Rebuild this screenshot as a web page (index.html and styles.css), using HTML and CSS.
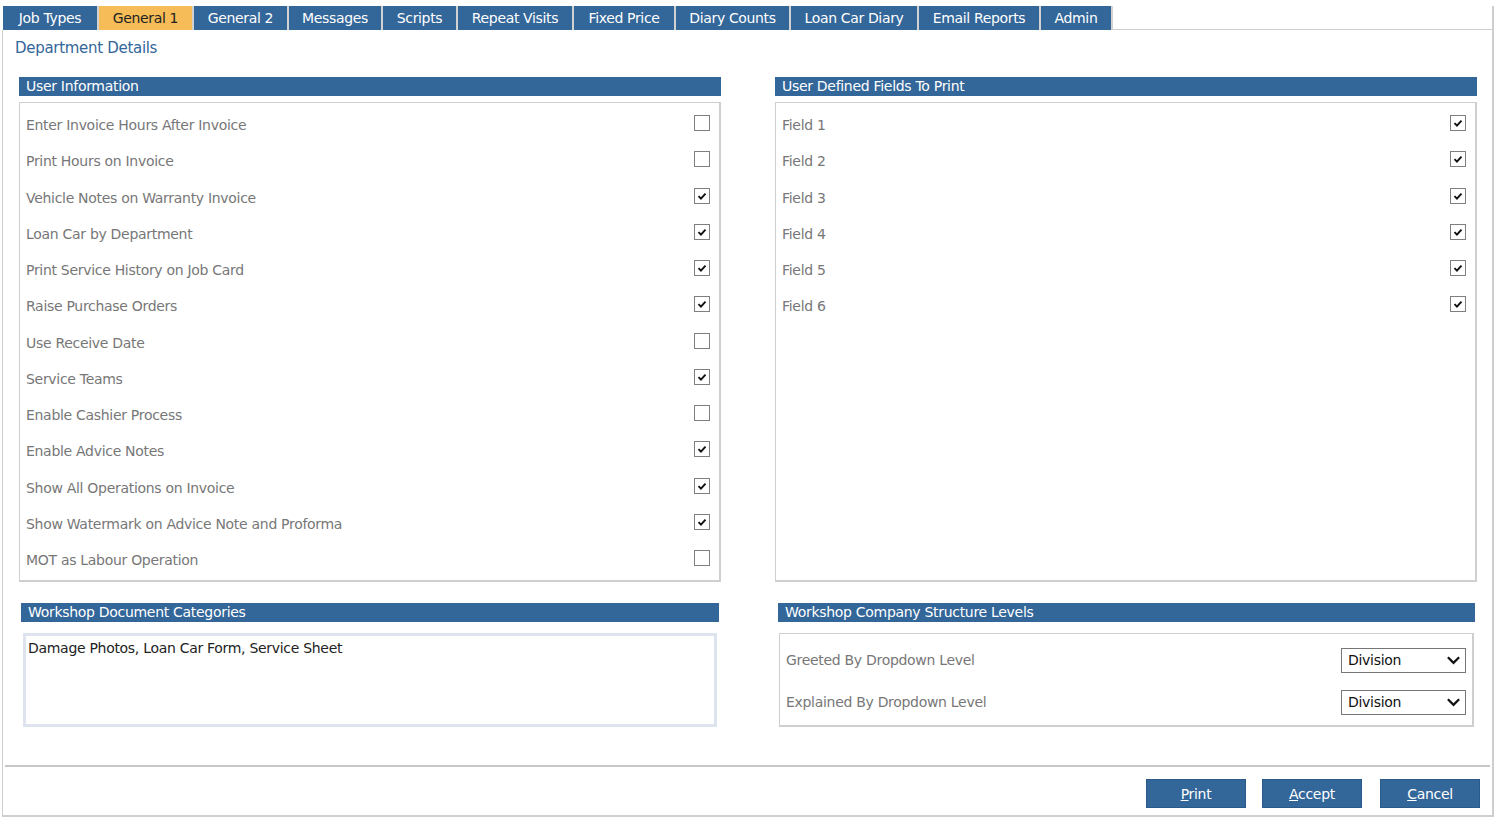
FILE: index.html
```html
<!DOCTYPE html>
<html>
<head>
<meta charset="utf-8">
<link rel="stylesheet" href="styles.css">
</head>
<body>
<div class="window">
  <div class="tabs">
    <div class="tab">Job Types</div>
    <div class="tab active">General 1</div>
    <div class="tab">General 2</div>
    <div class="tab">Messages</div>
    <div class="tab">Scripts</div>
    <div class="tab">Repeat Visits</div>
    <div class="tab">Fixed Price</div>
    <div class="tab">Diary Counts</div>
    <div class="tab">Loan Car Diary</div>
    <div class="tab">Email Reports</div>
    <div class="tab">Admin</div>
    <div class="tab-fill"></div>
  </div>
  <div class="panel">
    <div class="page-title">Department Details</div>
    <div class="cols top">
      <section class="col">
        <div class="sec-head">User Information</div>
        <div class="box list">
          <div class="row"><span>Enter Invoice Hours After Invoice</span><span class="cb"></span></div>
          <div class="row"><span>Print Hours on Invoice</span><span class="cb"></span></div>
          <div class="row"><span>Vehicle Notes on Warranty Invoice</span><span class="cb on"><svg viewBox="0 0 16 16"><path d="M4 8.2 L6.8 11 L12 5.2" /></svg></span></div>
          <div class="row"><span>Loan Car by Department</span><span class="cb on"><svg viewBox="0 0 16 16"><path d="M4 8.2 L6.8 11 L12 5.2" /></svg></span></div>
          <div class="row"><span>Print Service History on Job Card</span><span class="cb on"><svg viewBox="0 0 16 16"><path d="M4 8.2 L6.8 11 L12 5.2" /></svg></span></div>
          <div class="row"><span>Raise Purchase Orders</span><span class="cb on"><svg viewBox="0 0 16 16"><path d="M4 8.2 L6.8 11 L12 5.2" /></svg></span></div>
          <div class="row"><span>Use Receive Date</span><span class="cb"></span></div>
          <div class="row"><span>Service Teams</span><span class="cb on"><svg viewBox="0 0 16 16"><path d="M4 8.2 L6.8 11 L12 5.2" /></svg></span></div>
          <div class="row"><span>Enable Cashier Process</span><span class="cb"></span></div>
          <div class="row"><span>Enable Advice Notes</span><span class="cb on"><svg viewBox="0 0 16 16"><path d="M4 8.2 L6.8 11 L12 5.2" /></svg></span></div>
          <div class="row"><span>Show All Operations on Invoice</span><span class="cb on"><svg viewBox="0 0 16 16"><path d="M4 8.2 L6.8 11 L12 5.2" /></svg></span></div>
          <div class="row"><span>Show Watermark on Advice Note and Proforma</span><span class="cb on"><svg viewBox="0 0 16 16"><path d="M4 8.2 L6.8 11 L12 5.2" /></svg></span></div>
          <div class="row"><span>MOT as Labour Operation</span><span class="cb"></span></div>
        </div>
      </section>
      <section class="col">
        <div class="sec-head">User Defined Fields To Print</div>
        <div class="box list">
          <div class="row"><span>Field 1</span><span class="cb on"><svg viewBox="0 0 16 16"><path d="M4 8.2 L6.8 11 L12 5.2" /></svg></span></div>
          <div class="row"><span>Field 2</span><span class="cb on"><svg viewBox="0 0 16 16"><path d="M4 8.2 L6.8 11 L12 5.2" /></svg></span></div>
          <div class="row"><span>Field 3</span><span class="cb on"><svg viewBox="0 0 16 16"><path d="M4 8.2 L6.8 11 L12 5.2" /></svg></span></div>
          <div class="row"><span>Field 4</span><span class="cb on"><svg viewBox="0 0 16 16"><path d="M4 8.2 L6.8 11 L12 5.2" /></svg></span></div>
          <div class="row"><span>Field 5</span><span class="cb on"><svg viewBox="0 0 16 16"><path d="M4 8.2 L6.8 11 L12 5.2" /></svg></span></div>
          <div class="row"><span>Field 6</span><span class="cb on"><svg viewBox="0 0 16 16"><path d="M4 8.2 L6.8 11 L12 5.2" /></svg></span></div>
        </div>
      </section>
    </div>
    <div class="cols bottom">
      <section class="col left-b">
        <div class="sec-head">Workshop Document Categories</div>
        <div class="textarea">Damage Photos, Loan Car Form, Service Sheet</div>
      </section>
      <section class="col right-b">
        <div class="sec-head">Workshop Company Structure Levels</div>
        <div class="box struct">
          <div class="srow"><span>Greeted By Dropdown Level</span><div class="select">Division<svg viewBox="0 0 16 10"><path d="M2 2 L8 8 L14 2" /></svg></div></div>
          <div class="srow"><span>Explained By Dropdown Level</span><div class="select">Division<svg viewBox="0 0 16 10"><path d="M2 2 L8 8 L14 2" /></svg></div></div>
        </div>
      </section>
    </div>
    <div class="footer">
      <button class="btn"><u>P</u>rint</button>
      <button class="btn"><u>A</u>ccept</button>
      <button class="btn"><u>C</u>ancel</button>
    </div>
  </div>
</div>
</body>
</html>
```

FILE: styles.css
```css
* { box-sizing: border-box; }
html, body { margin: 0; padding: 0; background: #fff; }
body {
  font-family: "DejaVu Sans", Verdana, sans-serif;
  font-size: 13px;
  color: #777;
  letter-spacing: -0.3px;
}
.window {
  width: 1492px;
  margin: 6px 0 0 2px;
}
.tabs {
  display: flex;
  height: 24px;
  padding-left: 1px;
}
.tab {
  background: #336699;
  color: #fff;
  height: 24px;
  line-height: 24px;
  text-align: center;
  border-right: 2px solid #d2d2d2;
  font-size: 14px;
  white-space: nowrap;
  letter-spacing: -0.35px;
}
.tab:nth-child(1) { width: 96px; }
.tab:nth-child(2) { width: 95px; }
.tab:nth-child(3) { width: 95px; }
.tab:nth-child(4) { width: 94px; }
.tab:nth-child(5) { width: 75px; }
.tab:nth-child(6) { width: 116px; }
.tab:nth-child(7) { width: 102px; }
.tab:nth-child(8) { width: 115px; }
.tab:nth-child(9) { width: 128px; }
.tab:nth-child(10) { width: 122px; }
.tab:nth-child(11) { width: 72px; }
.tab.active { background: #f5bc57; color: #222; }
.tab-fill { flex: 1; border-bottom: 1px solid #cfcfcf; border-right: 2px solid #cfcfcf; }
.panel {
  border: 2px solid #cfcfcf;
  border-top: none;
  border-left-width: 1px;
  height: 787px;
  padding: 0 14px 0 16px;
  position: relative;
}
.page-title {
  color: #336699;
  font-size: 15px;
  padding: 9px 0 0 0;
  margin-left: -4px;
  height: 47px;
}
.cols {
  display: grid;
  grid-template-columns: 702px 702px;
  column-gap: 54px;
}
.sec-head {
  background: #336699;
  color: #fff;
  height: 19px;
  line-height: 19px;
  padding-left: 7px;
  font-size: 14px;
}
.box {
  border: 2px solid #cfcfcf;
  border-top-width: 1px;
  border-left-width: 1px;
  margin-top: 6px;
}
.list {
  height: 480px;
  padding: 4px 9px 0 6px;
}
.row {
  height: 36.25px;
  display: flex;
  align-items: center;
  justify-content: space-between;
  font-size: 14px;
}
.cb {
  width: 16px;
  height: 16px;
  border: 1px solid #7f7f7f;
  background: #fff;
  display: block;
  position: relative;
  top: -2px;
}
.cb svg { width: 14px; height: 14px; display: block; }
.cb svg path { fill: none; stroke: #111; stroke-width: 2.2; }
.bottom { margin-top: 21px; }
.left-b { padding: 0 2px; }
.right-b { padding: 0 2px 0 3px; }
.textarea {
  margin: 11px 2px 0 2px;
  height: 94px;
  border: 3px solid #dee4ee;
  color: #222;
  font-size: 14px;
  padding: 4px 2px;
}
.struct {
  margin: 11px 1px 0 1px;
  height: 94px;
  padding: 5px 6px 0 6px;
}
.srow {
  height: 42px;
  display: flex;
  align-items: center;
  justify-content: space-between;
  font-size: 14px;
}
.select {
  width: 125px;
  height: 25px;
  border: 1px solid #767676;
  color: #111;
  font-size: 14px;
  display: flex;
  align-items: center;
  justify-content: space-between;
  padding: 0 4px 0 6px;
}
.select svg { width: 15px; height: 10px; }
.select svg path { fill: none; stroke: #111; stroke-width: 2.4; }
.footer {
  position: absolute;
  left: 2px;
  right: 2px;
  top: 735px;
  border-top: 2px solid #c8c8c8;
  display: flex;
  justify-content: flex-end;
  padding: 12px 10px 0 0;
}
.btn {
  width: 100px;
  height: 29px;
  background: #336699;
  color: #fff;
  border: 1px solid #2a5a8a;
  font-family: inherit;
  font-size: 14px;
  letter-spacing: -0.3px;
  padding: 0;
  margin-left: 16px;
}
.btn:last-child { margin-left: 18px; }
.btn u { text-decoration: underline; }
```
